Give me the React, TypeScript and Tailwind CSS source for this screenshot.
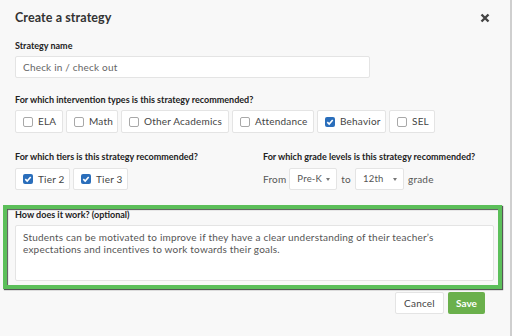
import React from "react";

function Check({ checked }: { checked?: boolean }) {
  if (checked) {
    return (
      <span className="flex h-[10px] w-[10px] items-center justify-center rounded-[2px] bg-[#2a6ebb]">
        <svg width="8" height="8" viewBox="0 0 8 8">
          <path d="M1.3 4.2 L3.2 6 L6.7 2" fill="none" stroke="white" strokeWidth="1.6" />
        </svg>
      </span>
    );
  }
  return <span className="h-[10px] w-[10px] rounded-[2px] border border-[#a8a8a8] bg-white" />;
}

function Option({ label, checked, w }: { label: string; checked?: boolean; w: string }) {
  return (
    <div className={`flex h-full items-center gap-[5px] rounded-[2px] border border-[#e4e4e4] bg-white pl-[7px] ${w}`}>
      <Check checked={checked} />
      <span className="text-[10px] tracking-[0.2px] text-[#444]">{label}</span>
    </div>
  );
}

function Select({ value, w }: { value: string; w: string }) {
  return (
    <div className={`flex h-[22px] items-center justify-between gap-[3px] rounded-[2px] border border-[#e4e4e4] bg-white pl-[7px] pr-[6px] ${w}`}>
      <span className="text-[9.5px] text-[#555]">{value}</span>
      <span className="h-0 w-0 shrink-0 border-x-[2.5px] border-t-[3px] border-x-transparent border-t-[#777]" />
    </div>
  );
}

export default function App() {
  return (
    <div className="h-[336px] w-[512px] overflow-hidden border-r-2 border-[#cfcfcf] bg-[#f8f8f8] font-['Lato',sans-serif] text-[#222]">
      {/* Header */}
      <div className="mt-[4px] flex h-[28px] items-center justify-between pl-[15px] pr-[20px]">
        <h1 className="text-[12.5px] font-bold tracking-[0.1px] text-[#333]">Create a strategy</h1>
        <svg width="10" height="10" viewBox="0 0 10 10">
          <path d="M1.5 1.5 L8.5 8.5 M8.5 1.5 L1.5 8.5" stroke="#444" strokeWidth="2.4" />
        </svg>
      </div>

      {/* Strategy name */}
      <div className="mt-[8px] pl-[15px]">
        <div className="h-[12px] text-[9px] font-bold leading-[12px]">Strategy name</div>
        <div className="mt-[4px] flex h-[22px] w-[355px] items-center rounded-[2px] border border-[#e4e4e4] bg-white px-[7px] text-[10px] tracking-[0.2px] text-[#666]">
          Check in / check out
        </div>
      </div>

      {/* Intervention types */}
      <div className="mt-[16px] pl-[15px]">
        <div className="h-[12px] text-[9px] font-bold leading-[12px]">
          For which intervention types is this strategy recommended?
        </div>
        <div className="mt-[4px] flex h-[23px] gap-[3px]">
          <Option label="ELA" w="w-[48px]" />
          <Option label="Math" w="w-[52px]" />
          <Option label="Other Academics" w="w-[108px]" />
          <Option label="Attendance" w="w-[82px]" />
          <Option label="Behavior" checked w="w-[69px]" />
          <Option label="SEL" w="w-[46px]" />
        </div>
      </div>

      {/* Tiers + grades */}
      <div className="mt-[18px] flex pl-[15px]">
        <div className="w-[248px]">
          <div className="h-[12px] text-[9px] font-bold leading-[12px]">For which tiers is this strategy recommended?</div>
          <div className="mt-[5px] flex h-[22px] gap-[3px]">
            <Option label="Tier 2" checked w="w-[55px]" />
            <Option label="Tier 3" checked w="w-[55px]" />
          </div>
        </div>
        <div>
          <div className="h-[12px] text-[9px] font-bold leading-[12px]">For which grade levels is this strategy recommended?</div>
          <div className="mt-[5px] flex items-center gap-[4px] text-[10px] tracking-[0.2px] text-[#555]">
            <span className="mr-[-1px]">From</span>
            <Select value="Pre-K" w="w-[48px]" />
            <span>to</span>
            <Select value="12th" w="w-[49px]" />
            <span>grade</span>
          </div>
        </div>
      </div>

      {/* How does it work (highlighted) */}
      <div className="ml-[3px] mt-[15px] w-[499px] border-4 border-[#5cbf5a] pb-[4px] pl-[8px] pr-[4px] shadow-[1px_1px_1px_#555,inset_1px_1px_1px_#555]">
        <div className="h-[12px] text-[9px] font-bold leading-[12px]">How does it work? (optional)</div>
        <div className="mt-[4px] h-[56px] rounded-[2px] border border-[#e4e4e4] bg-white pl-[7px] pr-[40px] pt-[5px] text-[10px] leading-[12px] tracking-[0.2px] text-[#555]">
          Students can be motivated to improve if they have a clear understanding of their teacher’s expectations and
          incentives to work towards their goals.
        </div>
      </div>

      {/* Footer */}
      <div className="mt-[3px] flex justify-end gap-[4px] pr-[25px]">
        <button className="h-[22px] w-[49px] rounded-[2px] border border-[#e4e4e4] bg-white text-[10px] tracking-[0.2px] text-[#444]">
          Cancel
        </button>
        <button className="h-[22px] w-[37px] rounded-[2px] bg-[#6ab04c] text-[10px] font-bold text-white">Save</button>
      </div>
    </div>
  );
}
